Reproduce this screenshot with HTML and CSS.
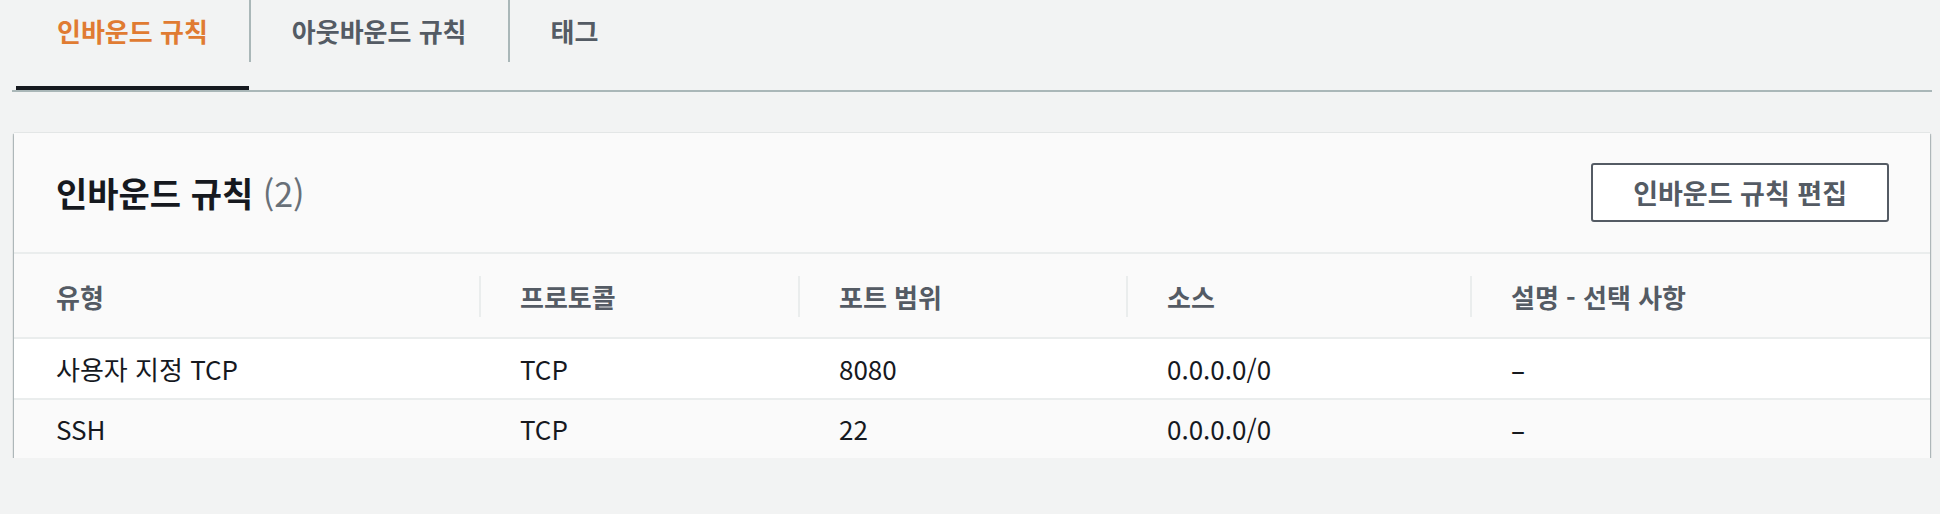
FILE: index.html
```html
<!DOCTYPE html>
<html lang="ko">
<head>
<meta charset="utf-8">
<title>인바운드 규칙</title>
<link rel="stylesheet" href="styles.css">
</head>
<body>
<div class="page">
  <nav class="tabs">
    <div class="tab active">인바운드 규칙</div>
    <div class="tab-sep"></div>
    <div class="tab">아웃바운드 규칙</div>
    <div class="tab-sep"></div>
    <div class="tab">태그</div>
  </nav>
  <section class="card">
    <header class="card-head">
      <h2 class="title">인바운드 규칙 <span class="count">(2)</span></h2>
      <button class="btn">인바운드 규칙 편집</button>
    </header>
    <div class="grid head">
      <div class="th"><div class="th-in">유형</div></div>
      <div class="th"><div class="th-in">프로토콜</div></div>
      <div class="th"><div class="th-in">포트 범위</div></div>
      <div class="th"><div class="th-in">소스</div></div>
      <div class="th"><div class="th-in">설명 - 선택 사항</div></div>
    </div>
    <div class="grid row r1">
      <div class="td">사용자 지정 TCP</div>
      <div class="td">TCP</div>
      <div class="td">8080</div>
      <div class="td">0.0.0.0/0</div>
      <div class="td dash">–</div>
    </div>
    <div class="grid row r2">
      <div class="td">SSH</div>
      <div class="td">TCP</div>
      <div class="td">22</div>
      <div class="td">0.0.0.0/0</div>
      <div class="td dash">–</div>
    </div>
  </section>
</div>
</body>
</html>
```
FILE: styles.css
```css
html, body {
  margin: 0;
  background: #f2f3f3;
  font-family: "Noto Sans CJK KR", "Noto Sans", sans-serif;
  color: #16191f;
}

.page {
  padding: 0 8px 0 12px;
}

/* Tabs */
.tabs {
  display: flex;
  height: 90px;
  padding-left: 4px;
  border-bottom: 2px solid #aab7b8;
}

.tab {
  box-sizing: border-box;
  height: 90px;
  padding: 12px 41px 0;
  font-size: 26px;
  font-weight: 700;
  line-height: 38px;
  color: #545b64;
  white-space: nowrap;
}

.tab.active {
  color: #e07b32;
  border-bottom: 4px solid #16191f;
}

.tab-sep {
  width: 2px;
  height: 62px;
  background: #aab7b8;
}

/* Card */
.card {
  margin: 41px 2px 0 2px;
  background: #fafafa;
  box-shadow: 0 1px 0 0 rgba(0, 28, 36, 0.3),
              0 2px 2px 0 rgba(0, 28, 36, 0.3),
              1px 1px 1px 0 rgba(0, 28, 36, 0.2),
              -1px 1px 1px 0 rgba(0, 28, 36, 0.2),
              0 -1px 0 0 rgba(0, 28, 36, 0.06);
}

.card-head {
  display: flex;
  align-items: center;
  justify-content: space-between;
  height: 119px;
  padding: 0 41px 0 42px;
  border-bottom: 2px solid #eaeded;
}

.title {
  margin: 0;
  font-size: 34px;
  font-weight: 700;
  line-height: 44px;
  color: #16191f;
}

.count {
  font-weight: 400;
  color: #687078;
}

.btn {
  box-sizing: border-box;
  height: 59px;
  padding: 0 40px;
  border: 2px solid #545b64;
  border-radius: 3px;
  background: #ffffff;
  font-family: "Noto Sans CJK KR", "Noto Sans", sans-serif;
  font-size: 27px;
  font-weight: 700;
  line-height: 1;
  color: #545b64;
}

/* Table */
.grid {
  display: grid;
  grid-template-columns: 465px 319px 328px 344px 1fr;
}

.head {
  padding: 22px 0 20px;
  border-bottom: 2px solid #eaeded;
}

.th-in {
  height: 41px;
  padding-left: 39px;
  border-left: 2px solid #eaeded;
  font-size: 26px;
  font-weight: 700;
  line-height: 41px;
  color: #545b64;
  white-space: nowrap;
}

.th:first-child .th-in {
  padding-left: 42px;
  border-left: 0;
}

.row {
  align-items: center;
  font-size: 26px;
  line-height: 34px;
  color: #16191f;
}

.r1 {
  height: 59px;
  background: #ffffff;
  border-bottom: 2px solid #eaeded;
}

.r2 {
  height: 58px;
  background: #fafafa;
}

.td {
  padding-left: 41px;
  white-space: nowrap;
}

.td:first-child {
  padding-left: 42px;
}

.dash {
  font-weight: 500;
}
```
